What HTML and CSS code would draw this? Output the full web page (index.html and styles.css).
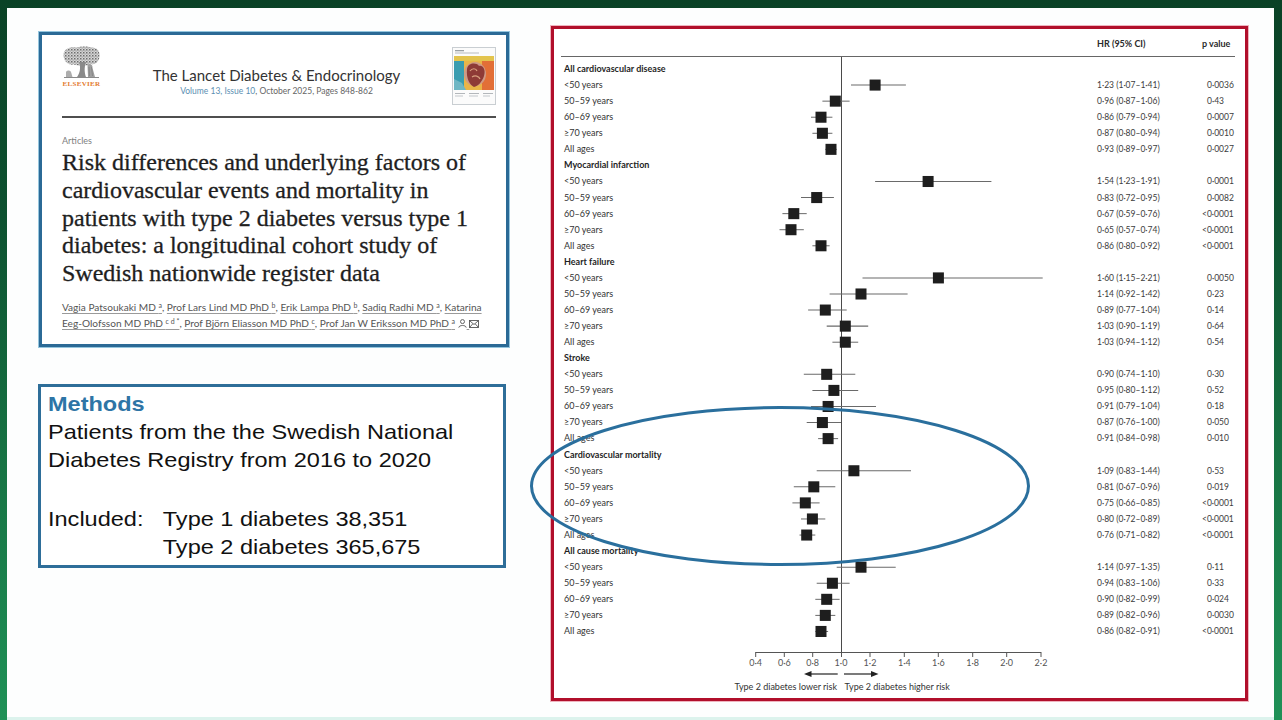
FILE: index.html
```html
<!DOCTYPE html>
<html lang="en">
<head>
<meta charset="utf-8">
<title>Risk differences – type 2 vs type 1 diabetes</title>
<link rel="stylesheet" href="styles.css">
</head>
<body>
<div class="slide">
  <div class="left-col">
    <section class="article-card">
      <header class="journal-head">
        <div class="elsevier">
          <svg class="tree" width="39" height="34" viewBox="0 0 39 34">
            <defs>
              <pattern id="leaf" width="3" height="3" patternUnits="userSpaceOnUse">
                <rect width="3" height="3" fill="#d6d6d6"/>
                <rect x="0" y="0" width="1.5" height="1.5" fill="#6e6e6e"/>
                <rect x="1.6" y="1.5" width="1.1" height="1.1" fill="#8c8c8c"/>
              </pattern>
            </defs>
            <path d="M1.5 9 C1.5 3 8 0.5 14 1.5 C19 0 26 0 30 1.5 C35 1.5 38 5 37.5 10 C37.5 15 34 19 29 18 C25 20 16 20 12 18.5 C6 19.5 1.5 15 1.5 9 Z" fill="url(#leaf)"/>
            <path d="M17 16 C19 22 18 27 15 31 L24 31 C22.5 27 22 22 24 16 Z" fill="#8a8a8a"/>
            <path d="M25.5 19 C27.5 17 31 18.5 30.5 22 L33 31 L26 31 Z" fill="#9e9e9e"/>
            <path d="M27 21 L27.5 30 M29.5 21 L30.5 30" stroke="#777" stroke-width="0.6"/>
            <path d="M4 26 C5 24 8 24 9 26 L10.5 31 L4 31 Z" fill="#adadad"/>
            <line x1="2" y1="31.5" x2="37" y2="31.5" stroke="#8a8a8a" stroke-width="1"/>
          </svg>
          <span class="elsevier-word">ELSEVIER</span>
        </div>
        <div class="journal-title">
          <div class="journal-name">The Lancet Diabetes &amp; Endocrinology</div>
          <div class="journal-issue"><span class="issue-link">Volume 13, Issue 10</span>, October 2025, Pages 848-862</div>
        </div>
        <svg class="cover" width="44" height="58" viewBox="0 0 44 58">
          <rect x="0.5" y="0.5" width="43" height="57" fill="#fbfbfb" stroke="#c9ced2"/>
          <rect x="3" y="3" width="9" height="1.3" fill="#9aa0a4"/>
          <rect x="3" y="5.5" width="24" height="1" fill="#b8bcc0"/>
          <rect x="2" y="9" width="40" height="34" fill="#e9b548"/>
          <path d="M2 14 H12 V43 H2 Z" fill="#3a9db0"/>
          <path d="M30 9 H42 V43 H30 Z" fill="#e26f37"/>
          <path d="M2 9 H42 V14 H2 Z" fill="#e3c44d"/>
          <path d="M2 32 L10 36 L14 43 H2 Z" fill="#6fb7c4"/>
          <ellipse cx="23" cy="27" rx="11" ry="12" fill="#cf9a86"/>
          <path d="M15 22 C16 16 24 15 27 19 C31 18 34 23 32 29 C30 35 26 39 22 40 C18 38 14 32 15 22 Z" fill="#8e3a36"/>
          <path d="M18 24 C20 21 24 21 25 24 M20 30 C23 28 27 29 28 32" stroke="#d9a07f" fill="none" stroke-width="1.2"/>
          <rect x="3" y="46" width="10" height="1" fill="#b3b7bb"/>
          <rect x="3" y="48.5" width="8" height="1" fill="#c3c7cb"/>
          <rect x="17" y="46" width="10" height="1" fill="#b3b7bb"/>
          <rect x="17" y="48.5" width="9" height="1" fill="#c3c7cb"/>
          <rect x="31" y="46" width="10" height="1" fill="#b3b7bb"/>
          <rect x="31" y="48.5" width="7" height="1" fill="#c3c7cb"/>
        </svg>
      </header>
      <div class="head-rule"></div>
      <div class="kicker">Articles</div>
      <h1 class="article-title">Risk differences and underlying factors of<br>cardiovascular events and mortality in<br>patients with type 2 diabetes versus type 1<br>diabetes: a longitudinal cohort study of<br>Swedish nationwide register data</h1>
      <p class="authors"><span class="au">Vagia Patsoukaki MD <sup>a</sup></span>, <span class="au">Prof Lars Lind MD PhD <sup>b</sup></span>, <span class="au">Erik Lampa PhD <sup>b</sup></span>, <span class="au">Sadiq Radhi MD <sup>a</sup></span>, <span class="au">Katarina<br>Eeg-Olofsson MD PhD <sup>c d *</sup></span>, <span class="au">Prof Björn Eliasson MD PhD <sup>c</sup></span>, <span class="au">Prof Jan W Eriksson MD PhD <sup>a</sup></span> <span class="au icons"><svg width="9" height="9" viewBox="0 0 9 9"><circle cx="4.5" cy="2.6" r="2" fill="none" stroke="#555" stroke-width="0.9"/><path d="M0.8 8.6 C1 5.8 8 5.8 8.2 8.6" fill="none" stroke="#555" stroke-width="0.9"/></svg> <svg width="10" height="8" viewBox="0 0 10 8"><rect x="0.5" y="0.5" width="9" height="7" fill="none" stroke="#555" stroke-width="0.9"/><path d="M0.8 0.8 L5 4.5 L9.2 0.8 M0.8 7.2 L3.8 3.8 M9.2 7.2 L6.2 3.8" fill="none" stroke="#555" stroke-width="0.9"/></svg></span></p>
    </section>

    <section class="methods">
      <div class="methods-text">
        <h2>Methods</h2>
        <p>Patients from the the Swedish National<br>Diabetes Registry from 2016 to 2020</p>
        <div class="included">
          <span class="inc-label">Included:</span>
          <span class="inc-list">Type 1 diabetes 38,351<br>Type 2 diabetes 365,675</span>
        </div>
      </div>
    </section>
  </div>

  <section class="forest">
    <div class="forest-head">
      <span></span>
      <span></span>
      <span class="fh-hr">HR (95% CI)</span>
      <span class="fh-p">p value</span>
    </div>
    <div class="forest-body">
      <ul class="col labels">
        <li class="cat">All cardiovascular disease</li>
        <li>&lt;50 years</li>
        <li>50–59 years</li>
        <li>60–69 years</li>
        <li>≥70 years</li>
        <li>All ages</li>
        <li class="cat">Myocardial infarction</li>
        <li>&lt;50 years</li>
        <li>50–59 years</li>
        <li>60–69 years</li>
        <li>≥70 years</li>
        <li>All ages</li>
        <li class="cat">Heart failure</li>
        <li>&lt;50 years</li>
        <li>50–59 years</li>
        <li>60–69 years</li>
        <li>≥70 years</li>
        <li>All ages</li>
        <li class="cat">Stroke</li>
        <li>&lt;50 years</li>
        <li>50–59 years</li>
        <li>60–69 years</li>
        <li>≥70 years</li>
        <li>All ages</li>
        <li class="cat">Cardiovascular mortality</li>
        <li>&lt;50 years</li>
        <li>50–59 years</li>
        <li>60–69 years</li>
        <li>≥70 years</li>
        <li>All ages</li>
        <li class="cat">All cause mortality</li>
        <li>&lt;50 years</li>
        <li>50–59 years</li>
        <li>60–69 years</li>
        <li>≥70 years</li>
        <li>All ages</li>
      </ul>

      <svg class="plot" width="320" height="640" viewBox="0 0 320 640">
        <line class="ref" x1="101.5" y1="0" x2="101.5" y2="595"/>
        <g transform="translate(0 12) scale(1 1.0044)">
          <g class="ci">
            <line x1="111" y1="16" x2="165.9" y2="16"/>
            <line x1="82.4" y1="32" x2="109.6" y2="32"/>
            <line x1="71" y1="48" x2="92.4" y2="48"/>
            <line x1="72.4" y1="64" x2="92.4" y2="64"/>
            <line x1="85.3" y1="80" x2="96.7" y2="80"/>
            <line x1="135.1" y1="112" x2="251.4" y2="112"/>
            <line x1="61" y1="128" x2="93.9" y2="128"/>
            <line x1="42.4" y1="144" x2="66.7" y2="144"/>
            <line x1="39.5" y1="160" x2="63.8" y2="160"/>
            <line x1="72.4" y1="176" x2="89.6" y2="176"/>
            <line x1="122.5" y1="208" x2="302.7" y2="208"/>
            <line x1="89.6" y1="224" x2="167.6" y2="224"/>
            <line x1="68.1" y1="240" x2="106.7" y2="240"/>
            <line x1="86.7" y1="256" x2="128.2" y2="256"/>
            <line x1="92.4" y1="272" x2="118.2" y2="272"/>
            <line x1="63.8" y1="304" x2="115.3" y2="304"/>
            <line x1="72.4" y1="320" x2="118.2" y2="320"/>
            <line x1="71" y1="336" x2="136" y2="336"/>
            <line x1="66.7" y1="352" x2="101" y2="352"/>
            <line x1="78.1" y1="368" x2="98.1" y2="368"/>
            <line x1="76.7" y1="400" x2="171" y2="400"/>
            <line x1="53.8" y1="416" x2="95.3" y2="416"/>
            <line x1="52.4" y1="432" x2="79.6" y2="432"/>
            <line x1="61" y1="448" x2="85.3" y2="448"/>
            <line x1="59.5" y1="464" x2="75.3" y2="464"/>
            <line x1="96.7" y1="496" x2="155.7" y2="496"/>
            <line x1="76.7" y1="512" x2="109.6" y2="512"/>
            <line x1="75.3" y1="528" x2="99.6" y2="528"/>
            <line x1="75.3" y1="544" x2="95.3" y2="544"/>
            <line x1="75.3" y1="560" x2="88.1" y2="560"/>
          </g>
          <g class="pt">
            <rect x="129.6" y="10.5" width="11" height="11"/>
            <rect x="89.8" y="26.5" width="11" height="11"/>
            <rect x="75.5" y="42.5" width="11" height="11"/>
            <rect x="76.9" y="58.5" width="11" height="11"/>
            <rect x="85.5" y="74.5" width="11" height="11"/>
            <rect x="182.6" y="106.5" width="11" height="11"/>
            <rect x="71.2" y="122.5" width="11" height="11"/>
            <rect x="48.3" y="138.5" width="11" height="11"/>
            <rect x="45.5" y="154.5" width="11" height="11"/>
            <rect x="75.5" y="170.5" width="11" height="11"/>
            <rect x="192.9" y="202.5" width="11" height="11"/>
            <rect x="115.5" y="218.5" width="11" height="11"/>
            <rect x="79.8" y="234.5" width="11" height="11"/>
            <rect x="99.8" y="250.5" width="11" height="11"/>
            <rect x="99.8" y="266.5" width="11" height="11"/>
            <rect x="81.2" y="298.5" width="11" height="11"/>
            <rect x="88.4" y="314.5" width="11" height="11"/>
            <rect x="82.6" y="330.5" width="11" height="11"/>
            <rect x="76.9" y="346.5" width="11" height="11"/>
            <rect x="82.6" y="362.5" width="11" height="11"/>
            <rect x="108.4" y="394.5" width="11" height="11"/>
            <rect x="68.3" y="410.5" width="11" height="11"/>
            <rect x="59.8" y="426.5" width="11" height="11"/>
            <rect x="66.9" y="442.5" width="11" height="11"/>
            <rect x="61.2" y="458.5" width="11" height="11"/>
            <rect x="115.5" y="490.5" width="11" height="11"/>
            <rect x="86.9" y="506.5" width="11" height="11"/>
            <rect x="81.2" y="522.5" width="11" height="11"/>
            <rect x="79.8" y="538.5" width="11" height="11"/>
            <rect x="75.5" y="554.5" width="11" height="11"/>
          </g>
        </g>
        <g class="axis">
          <line x1="15.7" y1="595.5" x2="301" y2="595.5"/>
          <line x1="15.7" y1="595" x2="15.7" y2="600"/>
          <line x1="44.3" y1="595" x2="44.3" y2="600"/>
          <line x1="72.7" y1="595" x2="72.7" y2="600"/>
          <line x1="101.5" y1="595" x2="101.5" y2="600"/>
          <line x1="130" y1="595" x2="130" y2="600"/>
          <line x1="164.3" y1="595" x2="164.3" y2="600"/>
          <line x1="198.3" y1="595" x2="198.3" y2="600"/>
          <line x1="232.7" y1="595" x2="232.7" y2="600"/>
          <line x1="266.7" y1="595" x2="266.7" y2="600"/>
          <line x1="301" y1="595" x2="301" y2="600"/>
        </g>
        <g class="ticks">
          <text x="15.7" y="609">0·4</text>
          <text x="44.3" y="609">0·6</text>
          <text x="72.7" y="609">0·8</text>
          <text x="101" y="609">1·0</text>
          <text x="130" y="609">1·2</text>
          <text x="164.3" y="609">1·4</text>
          <text x="198.3" y="609">1·6</text>
          <text x="232.7" y="609">1·8</text>
          <text x="266.7" y="609">2·0</text>
          <text x="301" y="609">2·2</text>
        </g>
        <g class="arrows">
          <line x1="97.7" y1="617" x2="70" y2="617"/>
          <polygon points="64,617 71.5,614 71.5,620"/>
          <line x1="104" y1="617" x2="132" y2="617"/>
          <polygon points="138.5,617 131,614 131,620"/>
        </g>
        <text class="dir dir-left" x="97" y="633">Type 2 diabetes lower risk</text>
        <text class="dir" x="104.5" y="633">Type 2 diabetes higher risk</text>
      </svg>

      <ul class="col hr">
        <li></li>
        <li>1·23 (1·07–1·41)</li>
        <li>0·96 (0·87–1·06)</li>
        <li>0·86 (0·79–0·94)</li>
        <li>0·87 (0·80–0·94)</li>
        <li>0·93 (0·89–0·97)</li>
        <li></li>
        <li>1·54 (1·23–1·91)</li>
        <li>0·83 (0·72–0·95)</li>
        <li>0·67 (0·59–0·76)</li>
        <li>0·65 (0·57–0·74)</li>
        <li>0·86 (0·80–0·92)</li>
        <li></li>
        <li>1·60 (1·15–2·21)</li>
        <li>1·14 (0·92–1·42)</li>
        <li>0·89 (0·77–1·04)</li>
        <li>1·03 (0·90–1·19)</li>
        <li>1·03 (0·94–1·12)</li>
        <li></li>
        <li>0·90 (0·74–1·10)</li>
        <li>0·95 (0·80–1·12)</li>
        <li>0·91 (0·79–1·04)</li>
        <li>0·87 (0·76–1·00)</li>
        <li>0·91 (0·84–0·98)</li>
        <li></li>
        <li>1·09 (0·83–1·44)</li>
        <li>0·81 (0·67–0·96)</li>
        <li>0·75 (0·66–0·85)</li>
        <li>0·80 (0·72–0·89)</li>
        <li>0·76 (0·71–0·82)</li>
        <li></li>
        <li>1·14 (0·97–1·35)</li>
        <li>0·94 (0·83–1·06)</li>
        <li>0·90 (0·82–0·99)</li>
        <li>0·89 (0·82–0·96)</li>
        <li>0·86 (0·82–0·91)</li>
      </ul>

      <ul class="col pv">
        <li></li>
        <li>0·0036</li>
        <li>0·43</li>
        <li>0·0007</li>
        <li>0·0010</li>
        <li>0·0027</li>
        <li></li>
        <li>0·0001</li>
        <li>0·0082</li>
        <li><span class="lt">&lt;</span>0·0001</li>
        <li><span class="lt">&lt;</span>0·0001</li>
        <li><span class="lt">&lt;</span>0·0001</li>
        <li></li>
        <li>0·0050</li>
        <li>0·23</li>
        <li>0·14</li>
        <li>0·64</li>
        <li>0·54</li>
        <li></li>
        <li>0·30</li>
        <li>0·52</li>
        <li>0·18</li>
        <li>0·050</li>
        <li>0·010</li>
        <li></li>
        <li>0·53</li>
        <li>0·019</li>
        <li><span class="lt">&lt;</span>0·0001</li>
        <li><span class="lt">&lt;</span>0·0001</li>
        <li><span class="lt">&lt;</span>0·0001</li>
        <li></li>
        <li>0·11</li>
        <li>0·33</li>
        <li>0·024</li>
        <li>0·0030</li>
        <li><span class="lt">&lt;</span>0·0001</li>
      </ul>
    </div>

    <svg class="ring" width="504" height="164" viewBox="0 0 504 164">
      <ellipse cx="252" cy="82" rx="248.5" ry="78.5"/>
    </svg>
  </section>
</div>
</body>
</html>
```

FILE: styles.css
```css
html, body {
  margin: 0;
  padding: 0;
}

body {
  width: 1282px;
  height: 720px;
  overflow: hidden;
  background: linear-gradient(180deg, #0a4226 0%, #0d5130 30%, #177444 65%, #1f9157 100%);
  font-family: "Lato", "Liberation Sans", sans-serif;
}

.slide {
  margin: 8px 8px 0 7px;
  height: 712px;
  box-sizing: border-box;
  background: #fdfefe;
  border-bottom: 3px solid #dcf3ed;
  display: flex;
  align-items: flex-start;
  padding: 18px 0 0 31px;
}

/* ---------- left column ---------- */
.left-col {
  width: 471px;
  padding-top: 6px;
  display: flex;
  flex-direction: column;
  align-items: flex-start;
  gap: 37px;
}

.article-card {
  width: 470px;
  margin-left: 1px;
  box-sizing: border-box;
  border: 3px solid #2b6a96;
  box-shadow: 0 0 0 1px #95c6de;
  background: #fff;
  padding: 11px 10px 13px 20px;
}

.journal-head {
  display: flex;
  align-items: flex-start;
  height: 59px;
}

.elsevier {
  width: 39px;
  display: flex;
  flex-direction: column;
  align-items: center;
}

.tree {
  display: block;
}

.elsevier-word {
  font-family: "Liberation Serif", serif;
  font-weight: bold;
  font-size: 7px;
  line-height: 8px;
  letter-spacing: 0.3px;
  color: #e47b2f;
}

.journal-title {
  flex: 1;
  text-align: center;
  padding-top: 20px;
}

.journal-name {
  font-size: 15px;
  line-height: 18px;
  color: #333;
}

.journal-issue {
  font-size: 8.5px;
  line-height: 14px;
  color: #666;
}

.issue-link {
  color: #5b8fb2;
}

.cover {
  display: block;
  margin-top: 1px;
}

.head-rule {
  height: 2px;
  margin-top: 11px;
  background: #4f4f4f;
}

.kicker {
  margin-top: 17px;
  font-size: 9px;
  line-height: 12px;
  color: #808080;
}

.article-title {
  margin: 2px 0 0;
  font-family: "Liberation Serif", serif;
  font-weight: normal;
  font-size: 24px;
  line-height: 27.8px;
  color: #1e1e1e;
  -webkit-text-stroke: 0.3px #1e1e1e;
  white-space: nowrap;
}

.authors {
  margin: 12px 0 0;
  font-size: 10.1px;
  line-height: 15.7px;
  color: #555;
  white-space: nowrap;
}

.au {
  text-decoration: underline;
  text-decoration-color: #9a9a9a;
  text-underline-offset: 2px;
}

.authors sup {
  font-size: 7px;
  line-height: 0;
  vertical-align: 3px;
}

.icons svg {
  vertical-align: -1px;
}

/* ---------- methods ---------- */
.methods {
  width: 468px;
  box-sizing: border-box;
  border: 3px solid #2e6e99;
  background: #fff;
  padding: 3px 7px 4px;
  font-family: "Liberation Sans", Arial, sans-serif;
  font-size: 21px;
  line-height: 28px;
  color: #111;
}

.methods-text {
  width: 400px;
  transform: scaleX(1.12);
  transform-origin: left top;
}

.methods h2 {
  margin: 0;
  font-size: 21px;
  line-height: 28px;
  font-weight: bold;
  color: #2e75a6;
}

.methods p {
  margin: 0;
  white-space: nowrap;
}

.included {
  display: flex;
  margin-top: 31px;
  white-space: nowrap;
}

.inc-label {
  width: 102.5px;
  flex: none;
}

/* ---------- forest plot ---------- */
.forest {
  position: relative;
  margin-left: 42px;
  width: 697px;
  box-sizing: border-box;
  border: 3px solid #b10f2b;
  box-shadow: 0 0 0 1px #efb4bf;
  background: #fff;
  padding: 8px 10px 1px 7px;
}

.forest-head,
.forest-body {
  display: grid;
  grid-template-columns: 179px 320px 1fr 33px;
}

.forest-head {
  height: 19px;
  line-height: 14px;
  border-bottom: 1px solid #666;
  font-size: 9px;
  font-weight: bold;
  color: #2a2a2a;
  white-space: nowrap;
}

.fh-hr {
  padding-left: 37px;
}

.col {
  list-style: none;
  margin: 0;
  padding: 4px 0 0;
}

.col li {
  height: 16.07px;
  line-height: 16px;
  white-space: nowrap;
}

.labels {
  padding-left: 3px;
  font-size: 9px;
  color: #333;
}

.labels .cat {
  font-weight: bold;
  color: #1f1f1f;
}

.hr {
  padding-left: 37px;
  font-size: 8.5px;
  color: #3c3c3c;
}

.pv {
  padding-left: 5px;
  font-size: 8.5px;
  color: #3c3c3c;
}

.lt {
  margin-left: -5px;
}

.plot {
  display: block;
  overflow: visible;
}

.plot .ref {
  stroke: #4a4a4a;
  stroke-width: 1;
}

.plot .ci line {
  stroke: #6a6a6a;
  stroke-width: 1;
}

.plot .pt rect {
  fill: #1e1e1e;
}

.plot .axis line {
  stroke: #555;
  stroke-width: 1;
}

.plot .ticks text {
  font-size: 9px;
  fill: #555;
  text-anchor: middle;
}

.plot .arrows line {
  stroke: #222;
  stroke-width: 1.2;
}

.plot .arrows polygon {
  fill: #222;
}

.plot .dir {
  font-size: 9px;
  fill: #333;
}

.plot .dir-left {
  text-anchor: end;
}

.ring {
  position: absolute;
  left: -26px;
  top: 375px;
  overflow: visible;
  pointer-events: none;
}

.ring ellipse {
  fill: none;
  stroke: #2a6f9d;
  stroke-width: 3;
}
```
